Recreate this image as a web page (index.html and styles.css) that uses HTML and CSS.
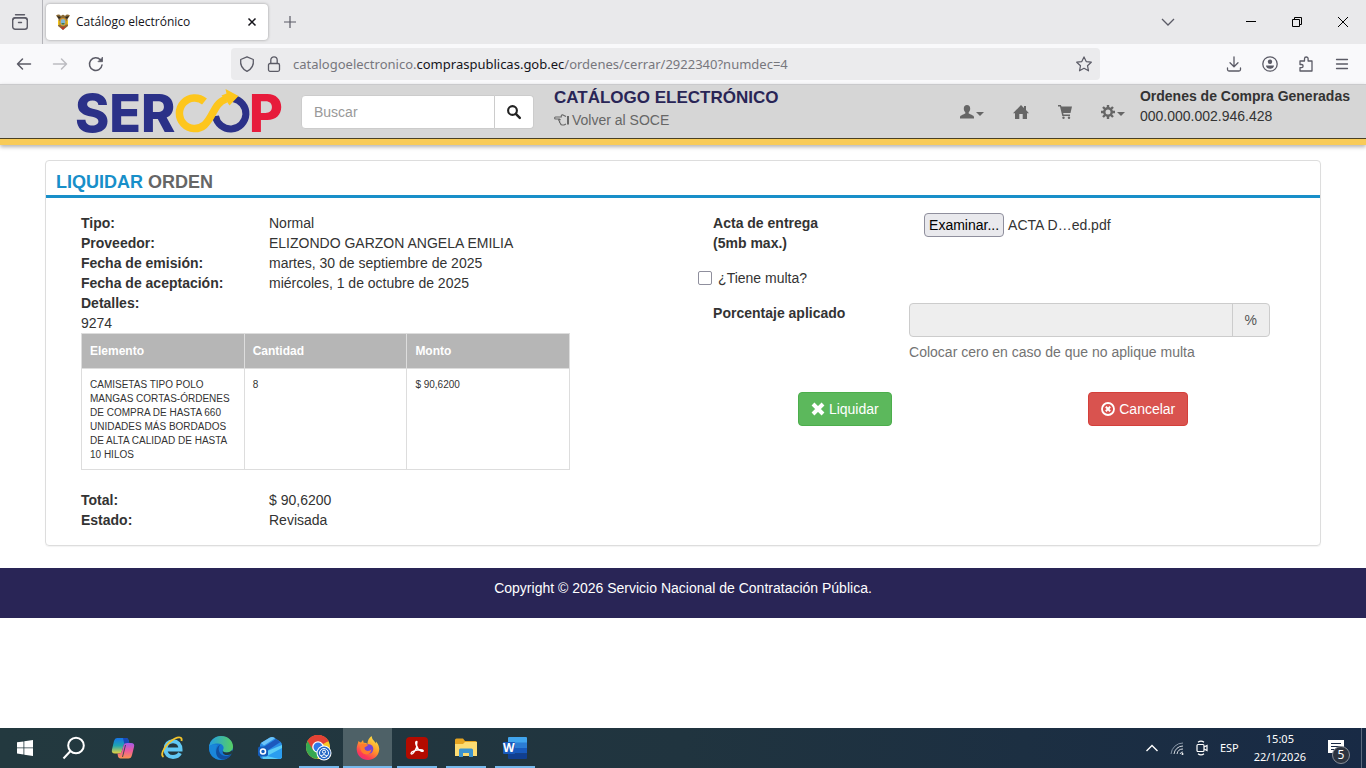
FILE: index.html
```html
<!DOCTYPE html>
<html lang="es">
<head>
    <meta charset="UTF-8">
    <meta name="viewport" content="width=device-width, initial-scale=1.0">
    <title>Catálogo electrónico</title>
    <link rel="stylesheet" href="styles.css">
</head>
<body>
    <!-- Pestañas -->
    <div class="tab-strip">
        <button class="history-btn" aria-label="Historial">
            <svg width="18" height="18" viewBox="0 0 18 18" fill="none" stroke="#5b5b66" stroke-width="1.4" stroke-linecap="round"><path d="M4.500 1.800h9"/><rect x="1.700" y="4.700" width="14.600" height="11.600" rx="2.500"/><path d="M2 6.500q1-1.800 3-1.800h8q2 0 3 1.800M7.500 9.500h3"/></svg>
        </button>
        <div class="tab">
            <svg width="16" height="18" viewBox="0 0 16 18"><path d="M1 2.5Q4 .5 6 3q2-2.500 4 0 2-2.500 5-.5l-2.500 3.500.5 7L8 17l-5-4 .5-7z" fill="#8a6a35"/><path d="M2 3l4 1-2 2zM14 3l-4 1 2 2z" fill="#2b2620"/><ellipse cx="8" cy="9" rx="3.500" ry="4" fill="#d99b2b"/><ellipse cx="8" cy="9" rx="2.300" ry="3" fill="#7fb6d8"/><path d="M6 10h4l-2 2z" fill="#4c7a3a"/><path d="M3 7l1.500 1v4L3 12z" fill="#f0c419"/><path d="M13 7l-1.500 1v4l1.500-1z" fill="#f0c419"/><path d="M5 13l3 1.500L11 13l-3 4z" fill="#c4312b"/></svg>
            <span class="tab-title">Catálogo electrónico</span>
            <button aria-label="Cerrar pestaña">
                <svg width="8" height="8" viewBox="0 0 8 8" stroke="#15141a" stroke-width="1.500"><path d="M.5.5l7 7M7.500.5l-7 7"/></svg>
            </button>
        </div>
        <button class="new-tab" aria-label="Nueva pestaña">
            <svg width="12" height="12" viewBox="0 0 12 12" stroke="#5b5b66" stroke-width="1.200"><path d="M6 0v12M0 6h12"/></svg>
        </button>
        <div class="window-controls">
            <button aria-label="Lista de pestañas"><svg width="12" height="12" viewBox="0 0 12 12" fill="none" stroke="#5b5b66" stroke-width="1.300"><path d="M0 3l6 6 6-6"/></svg></button>
            <button aria-label="Minimizar"><svg width="10" height="10" viewBox="0 0 10 10" stroke="#000"><path d="M0 4.500h10"/></svg></button>
            <button aria-label="Restaurar"><svg width="10" height="10" viewBox="0 0 10 10" fill="none" stroke="#000"><path d="M.5 2.500h7v7h-7zM2.500 2.500v-2h7v7h-2"/></svg></button>
            <button aria-label="Cerrar"><svg width="10" height="10" viewBox="0 0 10 10" stroke="#000"><path d="M0 0l10 10M10 0L0 10"/></svg></button>
        </div>
    </div>

    <!-- Barra de direcciones -->
    <div class="toolbar">
        <div class="nav-buttons">
            <button aria-label="Atrás"><svg width="16" height="16" viewBox="0 0 16 16" fill="none" stroke="#5b5b66" stroke-width="1.500" stroke-linecap="round" stroke-linejoin="round"><path d="M14.500 8H1.500M6.500 3l-5 5 5 5"/></svg></button>
            <button aria-label="Adelante" disabled><svg width="16" height="16" viewBox="0 0 16 16" fill="none" stroke="#bcbcc1" stroke-width="1.500" stroke-linecap="round" stroke-linejoin="round"><path d="M1.500 8h13M9.500 3l5 5-5 5"/></svg></button>
            <button aria-label="Recargar"><svg width="16" height="16" viewBox="0 0 16 16" fill="none" stroke="#5b5b66" stroke-width="1.500" stroke-linecap="round"><path d="M14 9a6.300 6.300 0 1 1-1.500-5"/><path d="M14.500 1.500v4.200h-4.200z" fill="#5b5b66" stroke-width=".8" stroke-linejoin="round"/></svg></button>
        </div>
        <div class="url-bar">
            <svg width="16" height="16" viewBox="0 0 16 16" fill="none" stroke="#5b5b66" stroke-width="1.300" stroke-linejoin="round"><path d="M8 .8l6.300 2.700c.6 5-1.500 9.500-6.300 11.800C3.200 13 1.100 8.500 1.700 3.500z"/></svg>
            <svg width="14" height="16" viewBox="0 0 14 16" fill="none" stroke="#5b5b66" stroke-width="1.300"><rect x="1.500" y="7.500" width="11" height="7.800" rx="1.500"/><path d="M3.800 7.500V4a3.200 3.200 0 0 1 6.400 0v3.500"/></svg>
            <div class="url">catalogoelectronico.<span>compraspublicas.gob.ec</span>/ordenes/cerrar/2922340?numdec=4</div>
            <button aria-label="Añadir a marcadores"><svg width="16" height="16" viewBox="0 0 16 16" fill="none" stroke="#5b5b66" stroke-width="1.200" stroke-linejoin="round"><path d="M8 .9l2.200 4.700 5.100.6-3.800 3.500 1 5.100L8 12.300l-4.500 2.500 1-5.100L.7 6.200l5.100-.6z"/></svg></button>
        </div>
        <div class="tools">
            <button aria-label="Descargas"><svg width="16" height="16" viewBox="0 0 16 16" fill="none" stroke="#5b5b66" stroke-width="1.300" stroke-linecap="round" stroke-linejoin="round"><path d="M8 .8v9.700M4 6.700l4 4 4-4M1.500 12v1.500q0 1.500 1.500 1.500h10q1.500 0 1.500-1.500V12"/></svg></button>
            <button aria-label="Cuenta"><svg width="16" height="16" viewBox="0 0 16 16"><circle cx="8" cy="8" r="7.200" fill="none" stroke="#5b5b66" stroke-width="1.300"/><circle cx="8" cy="5.800" r="2.200" fill="#5b5b66"/><path d="M4 9.500h8c0 2-1.800 3.300-4 3.300s-4-1.300-4-3.300z" fill="#5b5b66"/></svg></button>
            <button aria-label="Extensiones"><svg width="16" height="16" viewBox="0 0 16 16" fill="none" stroke="#5b5b66" stroke-width="1.300" stroke-linejoin="round"><path d="M2 5h4.500V2.800a1.800 1.800 0 0 1 3.600 0V5H14v10H2v-3.300h1.500a1.600 1.600 0 0 0 0-3.200H2z"/></svg></button>
            <button aria-label="Menú"><svg width="16" height="16" viewBox="0 0 16 16" stroke="#5b5b66" stroke-width="1.300" stroke-linecap="round"><path d="M2.500 3.500h11M2.500 8h11M2.500 12.500h11"/></svg></button>
        </div>
    </div>

    <header class="site-header">
        <a class="logo" href="#" aria-label="SERCOP">
            <svg width="208" height="46" viewBox="0 0 208 46">
                <text x="-1" y="43" fill="#2b3188">SER</text>
                <path d="M157 9.500A15.300 15.300 0 1 1 139.500 27" fill="none" stroke="#2b3188" stroke-width="7"/>
                <path d="M128.500 12.500A15.300 15.300 0 1 0 128.500 36C138 27 138 14 150 10" fill="none" stroke="#fdc61c" stroke-width="7.500"/>
                <path d="M149.500 0l13 7-9 9.500-2-3-6-7 5-2z" fill="#fdc61c"/>
                <text x="173" y="43" fill="#e71b3b">P</text>
            </svg>
        </a>
        <form class="search">
            <input type="text" placeholder="Buscar" aria-label="Buscar">
            <button type="button" aria-label="Buscar"><svg width="14" height="14" viewBox="0 0 14 14" fill="none" stroke="#222"><circle cx="5.500" cy="5.500" r="4.400" stroke-width="2.100"/><path d="M8.800 8.800l4 4" stroke-width="2.500" stroke-linecap="round"/></svg></button>
        </form>
        <div class="site-title">
            <h1>CATÁLOGO ELECTRÓNICO</h1>
            <a href="#"><svg width="15" height="12" viewBox="0 0 15 12" fill="none" stroke="#666" stroke-width="1.100" stroke-linejoin="round"><path d="M12 2.500L8.500.8Q7 .8 7.300 3H1.500C.3 3 .3 5 1.500 5h3.800l1.200 1M5.300 5c-1 .8-.6 2 .4 2.300-.5 1 0 1.700.8 2 0 1 .6 1.700 1.500 1.700h2l2-1"/><path d="M14 2v8.500" stroke-width="2"/></svg> Volver al SOCE</a>
        </div>
        <nav class="site-nav">
            <a href="#" aria-label="Usuario"><svg width="24" height="14" viewBox="0 0 24 14" fill="#666"><path d="M7 0c2 0 3.200 1.500 3.200 3.500 0 1.600-.6 2.900-1.500 3.700v1.300c1.500.9 5.300 1.800 5.300 3.500v1.500H0V12c0-1.700 3.800-2.600 5.300-3.500V7.200C4.400 6.400 3.800 5.100 3.800 3.500 3.800 1.500 5 0 7 0zM16 7h8l-4 4z"/></svg></a>
            <a href="#" aria-label="Inicio"><svg width="16" height="14" viewBox="0 0 16 14" fill="#666"><path d="M8 0l3 3V1h2v4l3 3.200h-2V14H9.700V9H6.300v5H2V8.200H0z"/></svg></a>
            <a href="#" aria-label="Carrito"><svg width="14" height="14" viewBox="0 0 14 14" fill="#666"><path d="M0 0h2.800l.7 1.500H14L12.500 8H5.200l.3 1.500H12V11H4.300L2 1.500H0z"/><circle cx="5.500" cy="12.700" r="1.200"/><circle cx="11" cy="12.700" r="1.200"/></svg></a>
            <a href="#" aria-label="Configuración"><svg width="24" height="14" viewBox="0 0 24 14" fill="#666"><circle cx="7" cy="7" r="3.700" fill="none" stroke="#666" stroke-width="2.400"/><path d="M7 0v3M7 11v3M0 7h3M11 7h3M2 2l2 2M10 10l2 2M12 2l-2 2M4 10l-2 2" stroke="#666" stroke-width="2.400"/><path d="M16 7h8l-4 4z"/></svg></a>
        </nav>
        <div class="orders">
            <strong>Ordenes de Compra Generadas</strong>
            <span>000.000.002.946.428</span>
        </div>
    </header>

    <main>
        <section class="panel">
            <h2><span>LIQUIDAR</span> ORDEN</h2>
            <div class="panel-body">
                <div class="order">
                    <dl>
                        <dt>Tipo:</dt><dd>Normal</dd>
                        <dt>Proveedor:</dt><dd>ELIZONDO GARZON ANGELA EMILIA</dd>
                        <dt>Fecha de emisión:</dt><dd>martes, 30 de septiembre de 2025</dd>
                        <dt>Fecha de aceptación:</dt><dd>miércoles, 1 de octubre de 2025</dd>
                        <dt>Detalles:</dt><dd></dd>
                    </dl>
                    <div>9274</div>
                    <table>
                        <thead>
                            <tr><th>Elemento</th><th>Cantidad</th><th>Monto</th></tr>
                        </thead>
                        <tbody>
                            <tr>
                                <td>CAMISETAS TIPO POLO MANGAS CORTAS-ÓRDENES DE COMPRA DE HASTA 660 UNIDADES MÁS BORDADOS DE ALTA CALIDAD DE HASTA 10 HILOS</td>
                                <td>8</td>
                                <td>$ 90,6200</td>
                            </tr>
                        </tbody>
                    </table>
                    <dl>
                        <dt>Total:</dt><dd>$ 90,6200</dd>
                        <dt>Estado:</dt><dd>Revisada</dd>
                    </dl>
                </div>

                <form class="settle">
                    <div class="row">
                        <label class="row-label" for="acta">Acta de entrega<br>(5mb max.)</label>
                        <div class="file">
                            <input type="file" id="acta" class="file-input">
                            <label class="file-btn" for="acta">Examinar...</label>
                            <span>ACTA D…ed.pdf</span>
                        </div>
                    </div>
                    <div class="check">
                        <input type="checkbox" id="multa">
                        <label for="multa">¿Tiene multa?</label>
                    </div>
                    <div class="row">
                        <label class="row-label" for="porcentaje">Porcentaje aplicado</label>
                        <div>
                            <div class="input-group">
                                <input type="text" id="porcentaje" disabled>
                                <span>%</span>
                            </div>
                            <p class="help">Colocar cero en caso de que no aplique multa</p>
                        </div>
                    </div>
                    <div class="actions">
                        <button type="button" class="btn btn-success"><svg width="14" height="14" viewBox="0 0 14 14" stroke="#fff" stroke-width="4"><path d="M2 2l10 10M12 2L2 12"/></svg> Liquidar</button>
                        <button type="button" class="btn btn-danger"><svg width="14" height="14" viewBox="0 0 14 14" fill="none" stroke="#fff"><circle cx="7" cy="7" r="6" stroke-width="1.800"/><path d="M4.800 4.800l4.400 4.400M9.200 4.800L4.800 9.200" stroke-width="2"/></svg> Cancelar</button>
                    </div>
                </form>
            </div>
        </section>
    </main>

    <footer class="site-footer">Copyright © 2026 Servicio Nacional de Contratación Pública.</footer>

    <!-- Barra de tareas -->
    <div class="taskbar">
        <div class="apps">
            <button aria-label="Inicio"><svg width="16" height="16" viewBox="0 0 16 16" fill="#fff"><path d="M0 2.300l6.500-.9v6.100H0zM7.300 1.300L16 0v7.500H7.300zM0 8.300h6.500v6.200L0 13.600zM7.300 8.300H16V16l-8.700-1.300z"/></svg></button>
            <button aria-label="Buscar"><svg width="24" height="24" viewBox="0 0 24 24" fill="none" stroke="#fff" stroke-width="2"><circle cx="14" cy="9.500" r="7.800"/><path d="M8.500 15L1.500 22.500"/></svg></button>
            <button aria-label="Copilot"><svg width="24" height="24" viewBox="0 0 24 24">
                <defs>
                    <linearGradient id="cp1" x2="0" y2="1"><stop offset="0" stop-color="#1674e8"/><stop offset=".5" stop-color="#20a6b0"/><stop offset="1" stop-color="#e8d33f"/></linearGradient>
                    <linearGradient id="cp2" x2="0" y2="1"><stop offset="0" stop-color="#a45bea"/><stop offset=".5" stop-color="#ee5b9d"/><stop offset="1" stop-color="#fb9450"/></linearGradient>
                </defs>
                <path d="M6 2h9q2 0 2.500 2l.8 3h-3q-2 0-2.600 2L11 15q-.7 2.500-3 2.500H4q-4 0-3-4L3 5q.8-3 3-3z" fill="url(#cp1)"/>
                <path d="M12 2h3q2 0 2.500 2l.8 3h-3q-1.300 0-2 1z" fill="#1848ba"/>
                <path d="M16 7h4q4 0 3 4l-2 8q-.8 3.500-3.500 3.500h-8q-2 0-2.500-2l-.5-3H8q2.300 0 3-2.500L12.600 9q.6-2 3.400-2z" fill="url(#cp2)"/>
                <path d="M14.500 9l-3 12" stroke="#23393f" stroke-width=".8"/>
            </svg></button>
            <button aria-label="Internet Explorer"><svg width="24" height="24" viewBox="0 0 24 24" fill="none"><path d="M5.500 13.500h15c0-5-3-8.300-7.500-8.300S5.500 8.500 5.500 13.200 8.600 21 13 21c3.200 0 5.700-1.300 7-3.800" stroke="#61c9f4" stroke-width="4"/><path d="M3.500 21C-1 18 7 6.500 15 2.500c4-2 7.500-1.500 6.500 2.500" stroke="#f4c52c" stroke-width="1.800"/></svg></button>
            <button aria-label="Edge"><svg width="24" height="24" viewBox="0 0 24 24">
                <defs><linearGradient id="ed"><stop offset="0" stop-color="#249ee4"/><stop offset="1" stop-color="#57cf62"/></linearGradient></defs>
                <circle cx="12" cy="12" r="12" fill="#1476d2"/>
                <path d="M0 11C1 4 6 0 12 0c7 0 12 5 12 10.500 0 4-3 6-6.500 6-3 0-4-1.200-3.500-2.500 2-3-.5-6.500-5-6.500C4 7.500 1 9.500 0 11z" fill="url(#ed)"/>
                <path d="M8.500 9C5 13 6.500 20.500 13 23.800 4 24 0 18 0 11c2-3 5-3.500 8.500-2z" fill="#1a86d9"/>
                <path d="M11.500 8.500c-4 4-1 11 4.500 11.500 3 .3 5-1 6.500-2.300-3 6-10 7.500-14 3C6 17 7 10.500 11.500 8.500z" fill="#124f9f"/>
                <path d="M14 14c-.5 1.300.5 2.500 3.500 2.500 2.500 0 4.500-.7 5.700-2.400l1.300 3.400-2 .2c-5 3-10 1-8.500-3.700z" fill="#23393f"/>
            </svg></button>
            <button aria-label="Outlook"><svg width="24" height="24" viewBox="0 0 24 24"><path d="M2 9q0-1.500 1.500-2.500L12 1.500q2-1 4 0l6 4q2 1.300 2 3.500v11q0 3-3 3H5q-3 0-3-3z" fill="#2a8fe8"/><path d="M3 7l9-5.500q2-1 4 0l1 .7L6 9.500z" fill="#6cc4f8"/><path d="M4 12L18 3l4.500 3L8 15.500z" fill="#1c58bd"/><path d="M8 15.500L24 9v11q0 3-3 3H5l-1-3z" fill="#5ccdf6"/><path d="M24 12L9 20l12 3q3 0 3-3z" fill="#2a9df0"/><rect y="10.500" width="10" height="10" rx="2" fill="#135cbb"/><circle cx="5" cy="15.500" r="2.500" fill="none" stroke="#fff" stroke-width="1.500"/></svg></button>
            <button class="open" aria-label="Chrome"><svg width="26" height="26" viewBox="0 0 26 26"><circle cx="12" cy="12" r="12" fill="#f8c727"/><path d="M12 12L1.600 6A12 12 0 0 1 22.400 6z" fill="#e44235"/><path d="M12 12L1.600 6A12 12 0 0 0 11 24l5-9z" fill="#36a852"/><path d="M1.600 6L7 15l5-8.500h10.600A12 12 0 0 0 1.600 6z" fill="#e44235"/><circle cx="12" cy="12" r="5.800" fill="#fff"/><circle cx="12" cy="12" r="4.500" fill="#3079e8"/><circle cx="18" cy="18" r="7.500" fill="#fff"/><circle cx="18" cy="18" r="6.500" fill="#2366c4"/><circle cx="18" cy="18" r="4.500" fill="none" stroke="#fff"/><circle cx="18" cy="16.700" r="1.600" fill="none" stroke="#fff"/><path d="M15 21q3-3 6 0" fill="none" stroke="#fff"/></svg></button>
            <button class="open active" aria-label="Firefox"><svg width="24" height="24" viewBox="0 0 24 24">
                <defs><linearGradient id="fx" x1=".8" y1="0" x2=".2" y2="1"><stop offset="0" stop-color="#ffe747"/><stop offset=".45" stop-color="#ff9b29"/><stop offset=".8" stop-color="#fc3a55"/><stop offset="1" stop-color="#e72c83"/></linearGradient></defs>
                <path d="M2.500 5Q3.500 6 5 6.500L7 4l.7 2.800Q10 6.500 11.500 8q0-5 4-8 .3 3 3 5.500 1 1 1.500 2V5.500Q24 10 23 15c-1 5.500-5.500 9-11 9S1 20 .7 13.500C.5 10 2 8 2.500 5z" fill="url(#fx)"/>
                <circle cx="12.500" cy="13" r="4.800" fill="#7545d6"/>
                <path d="M4 9q4-3 8 .5l-3.500 2q0 3 3 3.500 3 0 4-2-.5 5-5 5.500Q4 18 4 9z" fill="#ff7b2c"/>
            </svg></button>
            <button class="open" aria-label="Acrobat"><svg width="22" height="22" viewBox="0 0 22 22"><rect width="22" height="22" rx="4" fill="#b30b00"/><path d="M10.700 4.500c-1.500 0-1.300 2.300.1 5.300C9.500 13 7.500 16.500 6 17c-1.500.3-1.500-1.700 1.500-2.800 3-1.200 6.500-1.700 9-1.200 1.500.5.7 2-1.300 1.200-2.200-1-4-3.200-4.500-5.500-.4-2 .8-4.200 0-4.200z" fill="none" stroke="#fff" stroke-width="1.300"/></svg></button>
            <button class="open" aria-label="Explorador de archivos"><svg width="22" height="20" viewBox="0 0 22 20"><path d="M0 2q0-1.500 1.500-1.500H8L10 3h10.500Q22 3 22 4.500V17H0z" fill="#e6a421"/><path d="M0 6h8l2-2h12v14H0z" fill="#fddc72"/><path d="M4 19v-7q0-1.500 1.500-1.500h11Q18 10.500 18 12v7h-4v-4H8v4z" fill="#3c93cf"/></svg></button>
            <button class="open" aria-label="Word"><svg width="24" height="22" viewBox="0 0 24 22"><path d="M6 0h17q1 0 1 1v5H5V1q0-1 1-1z" fill="#41a5ee"/><path d="M5 5.500h19V11H5z" fill="#2b7cd3"/><path d="M5 11h19v5.500H5z" fill="#185abd"/><path d="M5 16.500h19V21q0 1-1 1H6q-1 0-1-1z" fill="#103f91"/><rect y="5" width="12" height="12" rx="1" fill="#185abd"/><text class="word-letter" x="0" y="15" fill="#fff">W</text></svg></button>
        </div>
        <div class="tray">
            <svg width="12" height="8" viewBox="0 0 12 8" fill="none" stroke="#fff" stroke-width="1.400"><path d="M.5 7L6 1.500 11.500 7"/></svg>
            <svg width="14" height="14" viewBox="0 0 14 14" fill="none" stroke="#d6dbe1"><path d="M1 13A12 12 0 0 1 13 2" stroke="#8795a6"/><path d="M4 13a9 9 0 0 1 9-8M7 13a6 6 0 0 1 6-5M10 13a3 3 0 0 1 3-2"/><circle cx="12.500" cy="13" r="1" fill="#fff" stroke="none"/></svg>
            <svg width="12" height="16" viewBox="0 0 12 16" fill="none" stroke="#fff" stroke-width="1.200"><rect x="1" y="4.500" width="7" height="7" rx="1"/><path d="M8 7l3-1.500v5L8 9M2 2.300Q5 0 8 2.300M2 13.700q3 2.300 6 0"/></svg>
            <span>ESP</span>
            <div class="clock">15:05<br>22/1/2026</div>
            <button class="notifications" aria-label="Notificaciones">
                <svg width="18" height="17" viewBox="0 0 18 17"><path d="M1 0h16v13h-3l-3 3.500V13H1z" fill="#fff"/><path d="M4 3.500h10M4 6.500h10M4 9.500h7" stroke="#1a2a45"/></svg>
                <span class="badge">5</span>
            </button>
        </div>
    </div>
</body>
</html>
```
FILE: styles.css
```css
* {
    box-sizing: border-box;
}

body {
    display: flex;
    flex-direction: column;
    min-height: 100vh;
    margin: 0;
    background-color: #fff;
    color: #333;
    font-family: 'Liberation Sans', Arial, sans-serif;
    font-size: 14px;
    line-height: 20px;
}

button {
    display: flex;
    align-items: center;
    justify-content: center;
    padding: 0;
    border: none;
    background: none;
    font: inherit;
}

svg {
    display: block;
    flex: none;
    overflow: visible;
}

/* navegador */
.tab-strip, .toolbar, .taskbar {
    font-family: 'Noto Sans', 'Open Sans', sans-serif;
}

.tab-strip {
    display: flex;
    align-items: center;
    height: 44px;
    background-color: #e9e9eb;
}

.history-btn {
    width: 43px;
    height: 44px;
    padding-right: 3px;
    border-right: 1px solid #b4b4b9;
}

.tab {
    display: flex;
    align-items: center;
    gap: 5px;
    width: 222px;
    height: 36px;
    margin: 0 16px 0 3px;
    padding: 0 12px 0 9px;
    border-radius: 4px;
    background-color: #fff;
    box-shadow: 0 0 3px rgba(0,0,0,0.35);
}

.tab-title {
    flex: 1;
    color: #15141a;
    font-family: 'Open Sans', sans-serif;
    font-size: 12px;
}

.window-controls {
    display: flex;
    margin-left: auto;
}

.window-controls button {
    width: 46px;
    height: 44px;
}

.window-controls button:first-child {
    margin-right: 37px;
}

.toolbar {
    display: flex;
    align-items: center;
    height: 40px;
    padding: 0 16px;
    background-color: #f9f9fb;
}

.nav-buttons, .tools {
    display: flex;
    gap: 20px;
}

.url-bar {
    display: flex;
    align-items: center;
    gap: 12px;
    flex: 1;
    height: 32px;
    margin: 0 126px 0 127px;
    padding: 0 8px;
    border-radius: 4px;
    background-color: #ebebed;
}

.url {
    flex: 1;
    color: #77777d;
    font-size: 13px;
}

.url span {
    color: #15141a;
}

/* cabecera */
.site-header {
    display: flex;
    align-items: center;
    height: 61px;
    padding: 1px 16px 2px 76px;
    border-top: 1px solid #cacacc;
    border-bottom: 6px solid #f8cb58;
    background-color: #d6d6d6;
    box-shadow: inset 0 -1px 0 #4a4023, 0 2px 4px rgba(0,0,0,0.3);
}

.logo text {
    font-family: Inter, sans-serif;
    font-size: 52px;
    font-weight: 800;
}

.search {
    display: flex;
    height: 34px;
    margin: 0 20px 0 17px;
}

.search input {
    width: 194px;
    padding: 6px 12px;
    border: 1px solid #ccc;
    border-radius: 4px 0 0 4px;
    font: inherit;
}

.search input::placeholder {
    color: #999;
}

.search button {
    width: 39px;
    border: 1px solid #ccc;
    border-left: none;
    border-radius: 0 4px 4px 0;
    background-color: #fff;
}

.site-title, .orders {
    align-self: flex-start;
}

.site-title h1 {
    margin: 0;
    color: #292556;
    font-size: 17px;
    line-height: 24px;
}

.site-title a {
    display: flex;
    align-items: center;
    gap: 3px;
    color: #666;
    text-decoration: none;
}

.site-nav {
    display: flex;
    gap: 29px;
    margin: 0 15px 0 auto;
}

.orders strong, .orders span {
    display: block;
}

/* contenido */
main {
    padding: 15px 45px 22px;
}

.panel {
    border: 1px solid #ddd;
    border-radius: 4px;
    box-shadow: 0 1px 1px rgba(0,0,0,0.05);
}

.panel h2 {
    margin: 0;
    padding: 10px 10px 2px;
    border-bottom: 3px solid #188fc9;
    color: #666;
    font-size: 18px;
    line-height: 22px;
}

.panel h2 span {
    color: #188fc9;
}

.panel-body {
    display: grid;
    grid-template-columns: 5fr 6fr;
    gap: 128px;
    padding: 15px 35px;
}

dl {
    display: grid;
    grid-template-columns: 188px 1fr;
    margin: 0;
}

dt {
    font-weight: bold;
}

dd {
    margin: 0;
}

table {
    width: 100%;
    margin-bottom: 20px;
    border-collapse: collapse;
    table-layout: fixed;
}

th, td {
    padding: 8px;
    border: 1px solid #ddd;
    text-align: left;
    vertical-align: top;
}

th {
    background-color: #b6b6b6;
    color: #fff;
    font-size: 12px;
    line-height: 18px;
}

td {
    padding-top: 9px;
    padding-bottom: 7px;
    font-size: 10px;
    line-height: 14px;
}

.row {
    display: grid;
    grid-template-columns: 196px 1fr;
    padding: 0 15px;
}

.row-label {
    font-weight: bold;
}

.file {
    display: flex;
    align-items: center;
    gap: 4px;
    height: 24px;
    padding-left: 15px;
}

.file-input {
    width: 0;
    margin: 0 -4px 0 0;
    opacity: 0;
}

.file-btn {
    padding: 1px 4px;
    border: 1px solid #8f8f9d;
    border-radius: 4px;
    background-color: #e9e9ed;
    color: #000;
}

.check {
    display: flex;
    align-items: center;
    gap: 6px;
    margin: 15px 0;
}

.check input {
    width: 14px;
    height: 14px;
    margin: 0;
    border: 1px solid #8f8f9d;
    border-radius: 2px;
    appearance: none;
}

.check input:checked {
    background-color: #0060df;
}

.input-group {
    display: flex;
    height: 34px;
    border: 1px solid #ccc;
    border-radius: 4px;
    background-color: #eee;
}

.input-group input {
    flex: 1;
    min-width: 0;
    border: none;
    background: none;
}

.input-group span {
    padding: 6px 12px;
    border-left: 1px solid #ccc;
    color: #555;
}

.help {
    margin: 5px 0 30px;
    color: #737373;
}

.actions {
    display: grid;
    grid-template-columns: 1fr 1fr;
    justify-items: center;
}

.btn {
    gap: 4px;
    padding: 6px 12px;
    border: 1px solid transparent;
    border-radius: 4px;
    color: #fff;
    cursor: pointer;
}

.btn-success {
    border-color: #4cae4c;
    background-color: #5cb85c;
}

.btn-danger {
    border-color: #d43f3a;
    background-color: #d9534f;
}

.site-footer {
    min-height: 50px;
    padding: 10px;
    background-color: #292556;
    color: #fff;
    text-align: center;
}

/* barra de tareas */
.taskbar {
    display: flex;
    justify-content: space-between;
    height: 40px;
    margin-top: auto;
    background: linear-gradient(90deg, #23393f, #20343f 50%, #182a45);
    color: #fff;
    font-size: 11px;
}

.apps, .tray {
    display: flex;
}

.apps button {
    width: 49px;
    height: 40px;
}

.apps .open {
    background: linear-gradient(#76b9ed, #76b9ed) bottom / 40px 2px no-repeat;
}

.apps .active {
    background: linear-gradient(#76b9ed, #76b9ed) bottom / 100% 2px no-repeat #4e6167;
}

.word-letter {
    font-size: 12px;
    font-weight: 700;
}

.tray {
    align-items: center;
    gap: 12px;
    padding-right: 4px;
}

.clock {
    margin-left: 3px;
    line-height: 18px;
    text-align: center;
}

.notifications {
    position: relative;
    width: 44px;
    height: 40px;
    padding-right: 8px;
    border-right: 1px solid #5c6a7e;
    color: #fff;
}

.badge {
    position: absolute;
    right: 11px;
    bottom: 4px;
    width: 18px;
    height: 18px;
    border: 1px solid #8a8f98;
    border-radius: 50%;
    background-color: #2d3440;
    font-size: 12px;
    line-height: 16px;
}
```
